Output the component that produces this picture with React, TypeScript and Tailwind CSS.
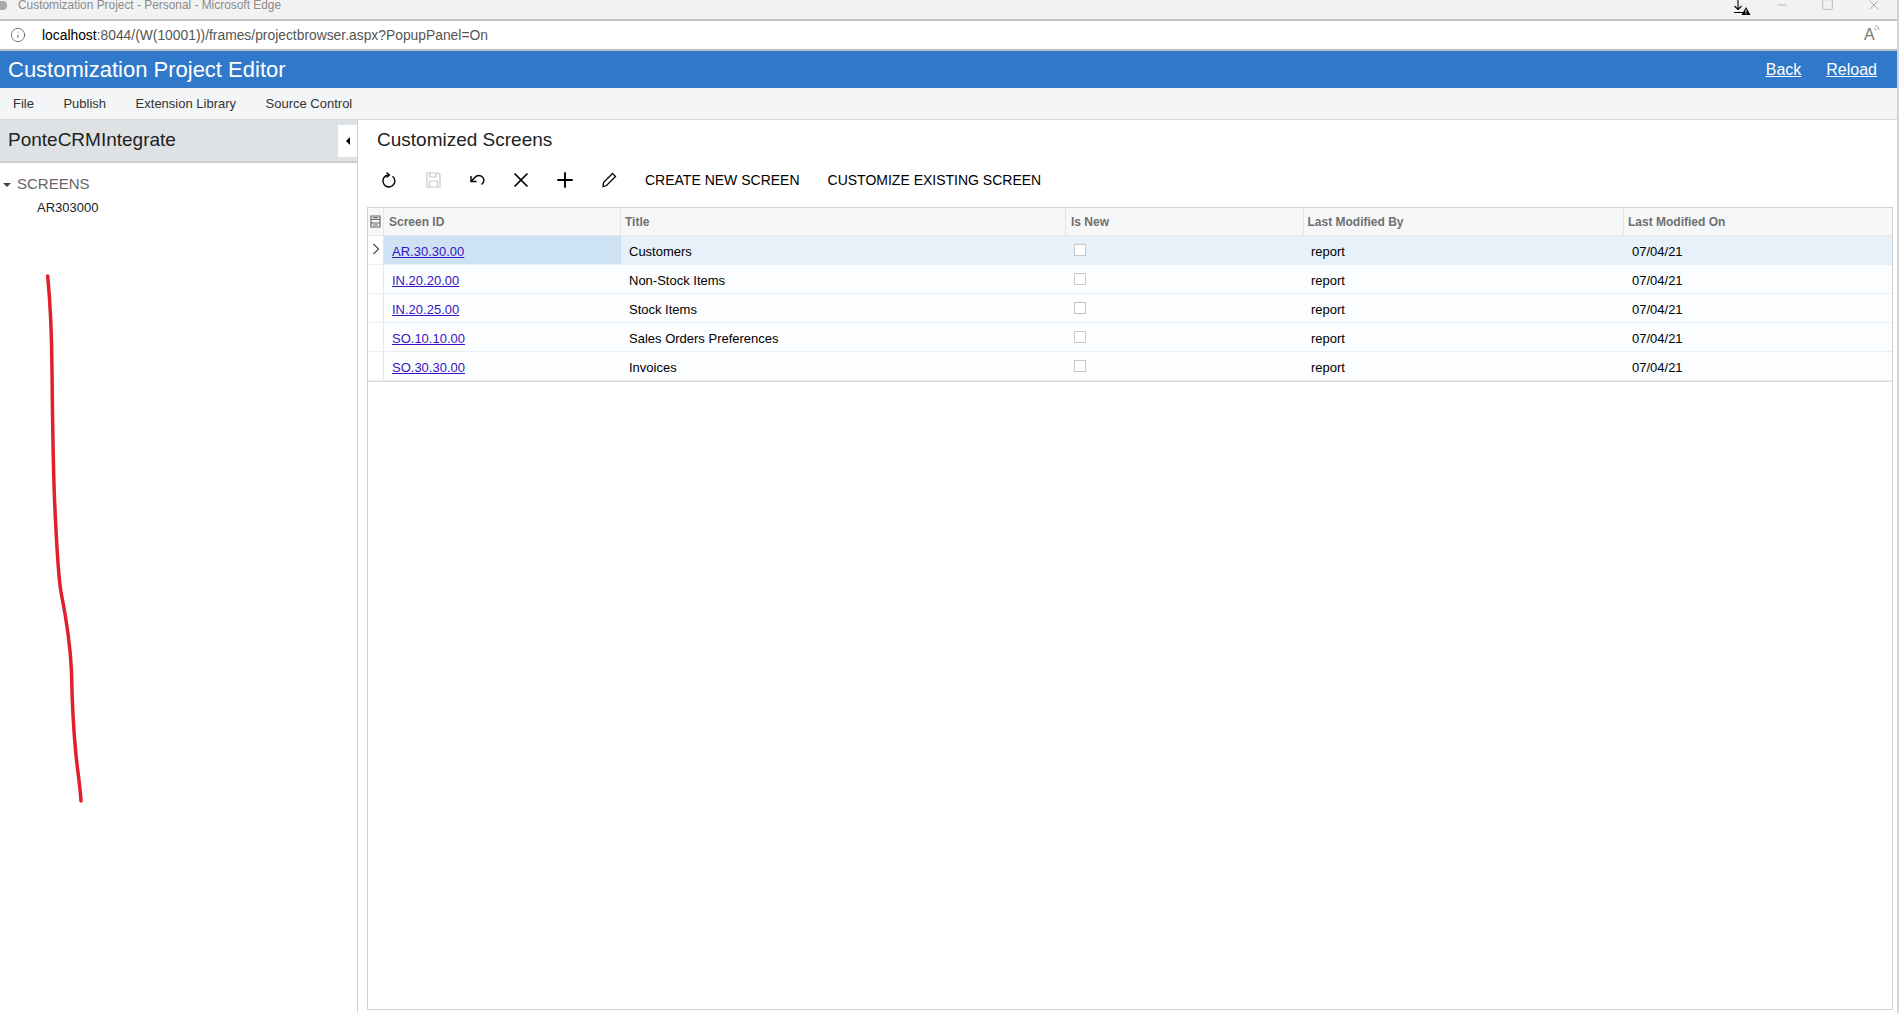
import { Info, Minus, Plus, Square, X } from "lucide-react";

const font = { fontFamily: '"Liberation Sans", Arial, sans-serif' };

const rows = [
  { id: "AR.30.30.00", title: "Customers" },
  { id: "IN.20.20.00", title: "Non-Stock Items" },
  { id: "IN.20.25.00", title: "Stock Items" },
  { id: "SO.10.10.00", title: "Sales Orders Preferences" },
  { id: "SO.30.30.00", title: "Invoices" },
];

const columns = "grid grid-cols-[16px_237px_445px_238px_320px_1fr]";

function WindowBar() {
  return (
    <div className="flex h-[21px] items-start justify-between border-b-2 border-[#c4c4c4] bg-[#f2f2f2] text-[#8a8a8a]">
      <div className="flex items-center">
        <div className="ml-[-3px] mr-[11px] mt-[-2px] h-[9px] w-[10px] rounded-sm bg-[#a9a9a9]" />
        <span className="mt-[-2px] text-[11.9px] leading-[14px]">Customization Project - Personal - Microsoft Edge</span>
      </div>
      <div className="flex items-start text-[#8f8f8f]">
        <svg width="18" height="16" viewBox="0 0 18 16" className="mr-[24px] text-black">
          <path d="M5 0v9M1.500 6 5 9.500 8.500 6M1 12.500h9" fill="none" stroke="currentColor" strokeWidth="1.100" />
          <path d="M13 7 17.500 15H8.500Z" fill="currentColor" />
          <path d="M13 9.500v3M13 13.300v1" stroke="#fff" strokeWidth="1" />
        </svg>
        <Minus size={14} strokeWidth={1} className="mr-[32px] mt-[-2px]" />
        <Square size={13} strokeWidth={1} className="mr-[32px] mt-[-2px]" />
        <X size={16} strokeWidth={1} className="mr-[15px] mt-[-3px]" />
      </div>
    </div>
  );
}

function AddressBar() {
  return (
    <div className="flex h-[30px] items-center justify-between border-b-2 border-[#b9bdc2] bg-white">
      <div className="flex items-center">
        <Info size={16} strokeWidth={1.200} className="ml-[10px] mr-[16px] text-[#555]" />
        <span className="text-[13.85px] text-[#555]">
          <span className="text-black">localhost</span>:8044/(W(10001))/frames/projectbrowser.aspx?PopupPanel=On
        </span>
      </div>
      <div className="relative mr-[19px] w-[14px] text-[16px] leading-none text-[#777]">
        A
        <svg width="8" height="9" viewBox="0 0 8 9" fill="none" stroke="#888" strokeWidth="0.800" className="absolute left-[9px] top-[-3px]">
          <path d="M1 4c1 0 2 1 2.200 2.500M2.500 1.500c2 .3 3.300 2 3.500 4.500" />
        </svg>
      </div>
    </div>
  );
}

function Toolbar() {
  return (
    <div className="mt-[10px] flex h-[36px] items-center pl-[9px] text-black">
      <button className="flex w-[44px] justify-center">
        <svg width="16" height="18" viewBox="0 0 16 18" fill="none" stroke="currentColor" strokeWidth="1.400">
          <path d="M7.500 4A6 6 0 1 0 11.500 5.200" />
          <path d="M5.500 1.500 8.500 4 5.500 6.500" strokeWidth="1.300" />
        </svg>
      </button>
      <button className="flex w-[44px] justify-center text-[#c9c9c9]">
        <svg width="15" height="16" viewBox="0 0 15 16" fill="none" stroke="currentColor" strokeWidth="1.200">
          <path d="M1 1h11l2 2v12H1Z" />
          <path d="M4 1v4h6V1M3.500 15v-6h8v6" />
        </svg>
      </button>
      <button className="flex w-[44px] justify-center">
        <svg width="17" height="14" viewBox="0 0 17 14" fill="none" stroke="currentColor" strokeWidth="1.400">
          <path d="M2 3v5.500h5.500" />
          <path d="M2.300 8.300 6 4.200a5 5 0 0 1 8 .5c1.500 2.500.5 5.300-1.500 6.800" />
        </svg>
      </button>
      <button className="flex w-[44px] justify-center">
        <X size={24} strokeWidth={1.700} />
      </button>
      <button className="flex w-[44px] justify-center">
        <Plus size={24} strokeWidth={1.900} />
      </button>
      <button className="flex w-[44px] justify-center">
        <svg width="16" height="16" viewBox="0 0 16 16" fill="none" stroke="currentColor" strokeWidth="1.300">
          <path d="M11.500 1.500 14.500 4.500 5.500 13.500 2 14.500 2.500 10.500Z" />
        </svg>
      </button>
      <button className="ml-[14px] text-[14px] text-black">CREATE NEW SCREEN</button>
      <button className="ml-[28px] text-[14px] text-black">CUSTOMIZE EXISTING SCREEN</button>
    </div>
  );
}

function ScreensGrid() {
  return (
    <div className="mb-[3px] ml-[9px] mr-[4px] mt-[9px] flex-1 border border-[#d2d2d2] bg-white">
      <div className={`${columns} h-[28px] border-b border-[#e3e5e8] bg-[#f6f7f8] text-[12px] font-bold text-[#707070]`}>
        <div className="flex items-center justify-center border-r border-[#e3e5e8]">
          <svg width="11" height="13" viewBox="0 0 11 13" fill="none" stroke="#666" strokeWidth="1.200">
            <path d="M1 1h9v11H1ZM1 4.500h9M1 8h9M3 2.700h5M3 10h5" />
          </svg>
        </div>
        <div className="flex items-center border-r border-[#e3e5e8] pl-[5px]">Screen ID</div>
        <div className="flex items-center border-r border-[#e3e5e8] pl-[4px]">Title</div>
        <div className="flex items-center border-r border-[#e3e5e8] pl-[5px]">Is New</div>
        <div className="flex items-center border-r border-[#e3e5e8] pl-[3.500px]">Last Modified By</div>
        <div className="flex items-center pl-[4px]">Last Modified On</div>
      </div>
      <div className="border-b border-[#dcdcdc]">
        {rows.map((row, i) => (
          <div
            key={row.id}
            className={`${columns} h-[29px] border-b border-[#e6eff5] text-[13px] text-black ${
              i === 0 ? "bg-[#e6f1fa]" : "bg-[#fbfdfe]"
            }`}
          >
            <div className="flex justify-center border-r border-[#e3e5e8] bg-white pt-[7px]">
              {i === 0 && (
                <svg width="8" height="12" viewBox="0 0 8 12" fill="none" stroke="#555" strokeWidth="1.300">
                  <path d="M1.500 1 6.500 6 1.500 11" />
                </svg>
              )}
            </div>
            <div className={`flex items-center pl-[8px] pt-[4px] ${i === 0 ? "bg-[#cde3f3]" : ""}`}>
              <a className="text-[#3a14c4] underline">{row.id}</a>
            </div>
            <div className="flex items-center pl-[8px] pt-[4px]">{row.title}</div>
            <div className="pl-[8px] pt-[8px]">
              <div className="h-[12px] w-[12px] border border-[#c9c9c9] bg-white" />
            </div>
            <div className="flex items-center pl-[7px] pt-[4px]">report</div>
            <div className="flex items-center pl-[8px] pt-[4px]">07/04/21</div>
          </div>
        ))}
      </div>
    </div>
  );
}

export default function App() {
  return (
    <div className="relative h-[1013px] w-full overflow-hidden bg-white" style={font}>
      <div className="flex h-full w-[1899px] flex-col border-r-2 border-[#d4d4d4]">
        <WindowBar />
        <AddressBar />
        <div className="flex h-[37px] items-center justify-between bg-[#3078c9] px-[8px] text-white">
          <span className="text-[22px]">Customization Project Editor</span>
          <div className="flex gap-[25px] pr-[12px] text-[16px] underline">
            <a>Back</a>
            <a>Reload</a>
          </div>
        </div>
        <div className="flex h-[32px] items-center gap-[29.5px] border-b border-[#d6d6d6] bg-[#f4f5f7] pl-[13px] text-[13px] text-[#333]">
          <span>File</span>
          <span>Publish</span>
          <span>Extension Library</span>
          <span>Source Control</span>
        </div>
        <div className="flex flex-1">
          <div className="flex w-[358px] flex-col border-r border-[#d2d2d2]">
            <div className="flex h-[43px] border-b-2 border-[#c9ccd0] bg-[#dfe2e5]">
              <span className="flex-1 pl-[8px] pt-[8px] text-[19px] leading-[24px] text-[#222]">PonteCRMIntegrate</span>
              <div className="mt-[5px] flex h-[32px] w-[19px] items-center justify-center bg-white">
                <div className="h-0 w-0 border-y-[4px] border-r-[4px] border-y-transparent border-r-black" />
              </div>
            </div>
            <div className="flex items-center pl-[3px] pt-[11px] text-[15px] leading-[20px] text-[#666]">
              <div className="mr-[6px] mt-[2px] h-0 w-0 border-x-[4px] border-t-[4px] border-x-transparent border-t-[#444]" />
              SCREENS
            </div>
            <div className="pl-[37px] pt-[4px] text-[13px] leading-[20px] text-[#222]">AR303000</div>
          </div>
          <div className="flex flex-1 flex-col">
            <h1 className="pl-[19px] pt-[8px] text-[19px] leading-[24px] text-[#222]">Customized Screens</h1>
            <Toolbar />
            <ScreensGrid />
          </div>
        </div>
      </div>
      {/* hand drawn marker stroke on top of the screenshot */}
      <svg className="absolute left-0 top-0 pointer-events-none" width="120" height="820" fill="none">
        <path
          d="M47.700 276C50 300 51.700 330 52 370C52.500 420 53 470 55 510C57 550 58 575 61 592C65 612 70 640 71.500 671C72 700 73 725 76 755C78 775 80 785 81 801"
          stroke="#e0202a"
          strokeWidth="3.500"
          strokeLinecap="round"
        />
      </svg>
    </div>
  );
}
